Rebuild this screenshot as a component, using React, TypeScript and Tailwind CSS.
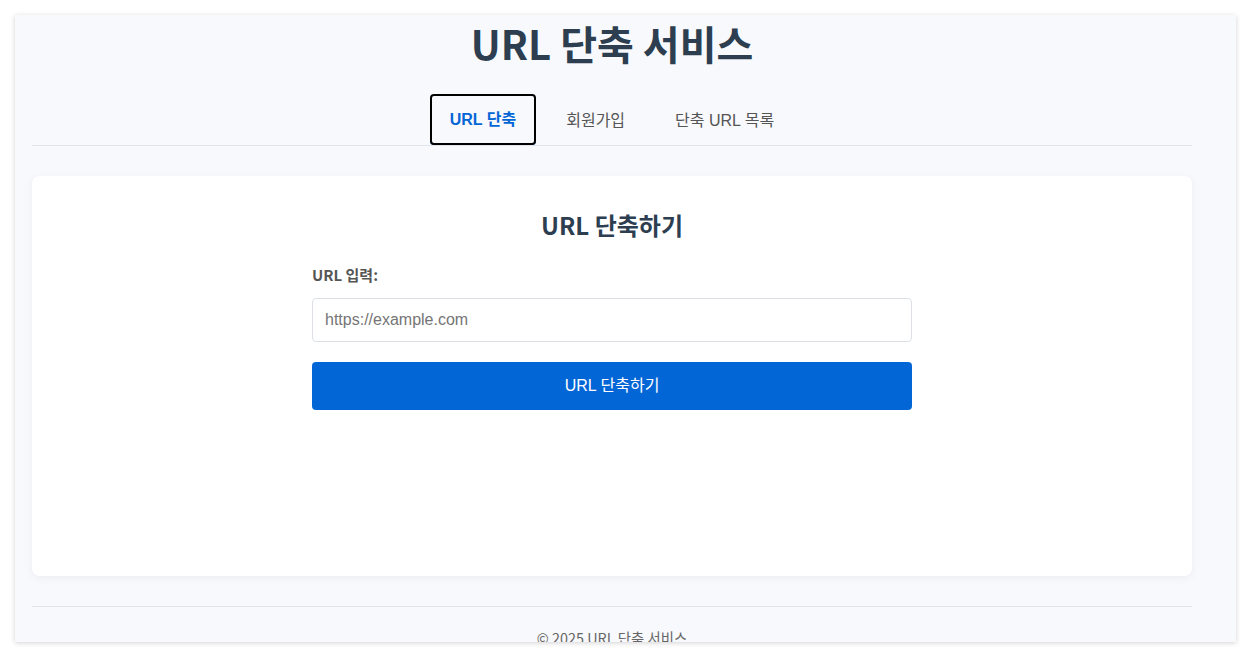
import React from "react";

const body = { fontFamily: '"Noto Sans CJK KR", "Noto Sans", sans-serif' };
const ctrl = { fontFamily: '"Liberation Sans", Arial, "Noto Sans CJK KR", sans-serif' };

export default function App() {
  return (
    <div className="w-[1251px] h-[657px] bg-white overflow-hidden pt-[15px] pl-[15px]" style={body}>
      <div className="w-[1221px] h-[627px] bg-[#f8f9fc] overflow-hidden shadow-[0_1px_5px_rgba(0,0,0,0.18)] pl-[17px]">
        <div className="w-[1160px]">
          <h1 className="text-center text-[40px] font-bold text-[#2c3e50] leading-[58px] mt-[-1px]">URL 단축 서비스</h1>
          <nav className="mt-[22px] flex justify-center gap-[10px] border-b border-[#e1e4e8]">
            <button
              className="px-5 h-[51px] pt-[2px] text-[16px] font-bold text-[#0366d6] border-b-2 border-[#0366d6] rounded-[4px] outline-2 outline-black outline-offset-[-2px]"
              style={ctrl}
            >
              URL 단축
            </button>
            <button className="px-5 h-[51px] pt-[2px] text-[16px] text-[#555]" style={ctrl}>
              회원가입
            </button>
            <button className="px-5 h-[51px] pt-[2px] text-[16px] text-[#555]" style={ctrl}>
              단축 URL 목록
            </button>
          </nav>
          <main className="mt-[30px] bg-white rounded-lg shadow-[0_2px_10px_rgba(0,0,0,0.05)] h-[400px] pt-[31px]">
            <h2 className="text-center text-[24px] font-bold text-[#2c3e50] leading-[36px]">URL 단축하기</h2>
            <div className="w-[600px] mx-auto mt-[21px]">
              <label className="block text-[15px] font-bold text-[#555] leading-[22px]">URL 입력:</label>
              <input
                type="text"
                placeholder="https://example.com"
                className="mt-[12px] block w-full h-[44px] px-3 border border-[#dde1e6] rounded-[4px] text-[16px] bg-white placeholder:text-[#757575]"
                style={ctrl}
              />
              <button
                className="mt-[20px] block w-full h-[48px] bg-[#0366d6] text-white rounded-[4px] text-[16px]"
                style={ctrl}
              >
                URL 단축하기
              </button>
            </div>
          </main>
          <footer className="mt-[30px] border-t border-[#e1e4e8] pt-[20px] text-center text-[14.4px] text-[#666] leading-[22px]">
            © 2025 URL 단축 서비스
          </footer>
        </div>
      </div>
    </div>
  );
}
